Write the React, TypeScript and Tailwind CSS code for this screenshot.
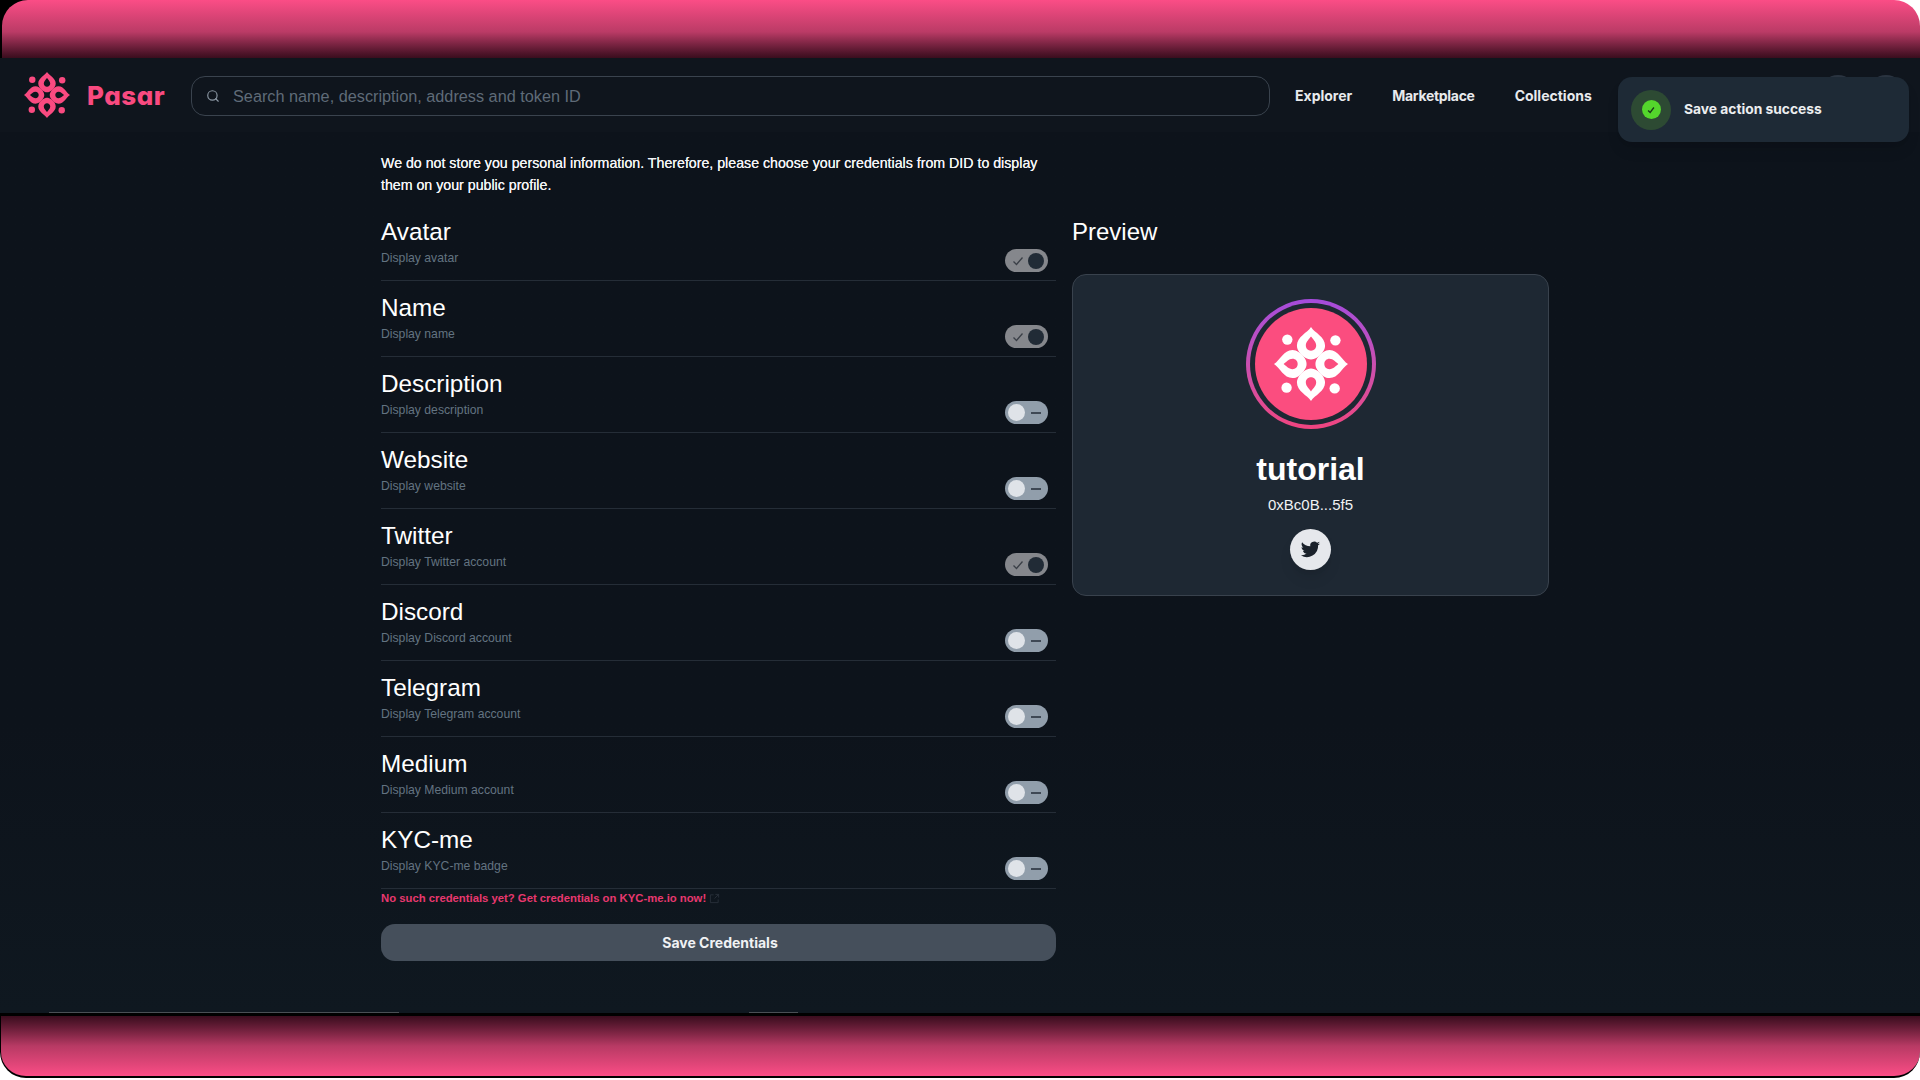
import { Search } from "lucide-react"

const rows = [
  { title: "Avatar", desc: "Display avatar", on: true },
  { title: "Name", desc: "Display name", on: true },
  { title: "Description", desc: "Display description", on: false },
  { title: "Website", desc: "Display website", on: false },
  { title: "Twitter", desc: "Display Twitter account", on: true },
  { title: "Discord", desc: "Display Discord account", on: false },
  { title: "Telegram", desc: "Display Telegram account", on: false },
  { title: "Medium", desc: "Display Medium account", on: false },
  { title: "KYC-me", desc: "Display KYC-me badge", on: false },
]

function Flower({ className, color, hole }: { className: string; color: string; hole: string }) {
  const petal = "M50 0 C55 8 69 13 69 25 C69 31 65 36 60 40 C56 43 53 44 50 44 C47 44 44 43 40 40 C35 36 31 31 31 25 C31 13 45 8 50 0 Z"
  const drop = "M50 13 C52 16 57 20 57 25 C57 29 54 32 50 32 C46 32 43 29 43 25 C43 20 48 16 50 13 Z"
  return (
    <svg viewBox="0 0 100 100" className={className}>
      {[0, 90, 180, 270].map((r) => (
        <g key={r} transform={`rotate(${r} 50 50)`}>
          <path d={petal} fill={color} />
          <path d={drop} fill={hole} />
          <circle cx="18" cy="17" r="7" fill={color} />
        </g>
      ))}
    </svg>
  )
}

function Toggle({ on }: { on: boolean }) {
  if (on) {
    return (
      <div className="flex h-[23px] w-[43px] items-center justify-between rounded-full bg-[#85878c] pl-[7px] pr-[4px]">
        <svg viewBox="0 0 12 12" className="h-3 w-3" fill="none" stroke="#3a3f47" strokeWidth="1.3">
          <path d="M1.5 6.5 L4.5 9.5 L10.5 2.5" />
        </svg>
        <div className="h-[16px] w-[16px] rounded-full bg-[#212b36]" />
      </div>
    )
  }
  return (
    <div className="flex h-[23px] w-[43px] items-center justify-between rounded-full bg-[#919eab] pl-[3px] pr-[7px]">
      <div className="h-[17px] w-[17px] rounded-full bg-[#dfe3e8]" />
      <div className="h-[2px] w-[10px] bg-[#3f4854]" />
    </div>
  )
}

export default function App() {
  return (
    <div className="flex h-[1080px] w-[1920px] flex-col overflow-hidden bg-white font-['Liberation_Sans',sans-serif] text-white">
      <div className="h-[58px] shrink-0 bg-[linear-gradient(90deg,#000_50%,#fff_50%)] pl-[2px]">
        <div className="h-full rounded-tl-[26px] rounded-tr-[26px] bg-gradient-to-b from-[#fb4d86] via-[#bb3b66] via-55% to-[#3a0d1e]" />
      </div>

      <div className="relative flex h-[955px] shrink-0 flex-col bg-gradient-to-b from-[#0d131b] via-[#0d131b] via-70% to-[#0f1820]">
        {/* Header */}
        <div className="flex h-[74px] shrink-0 items-center bg-[#0f151d] pl-[24px]">
          <Flower className="h-[46px] w-[46px]" color="#f94a80" hole="#0f151d" />
          <span className="ml-[17px] w-[84px] font-['Inter',sans-serif] text-[26px] font-extrabold tracking-[0.5px] text-[#f94a80] [font-feature-settings:'cv11']">Pasar</span>
          <div className="ml-[20px] mt-[2px] flex h-[40px] w-[1079px] items-center rounded-[14px] border border-[#3a434e] pl-[14px] text-[16.25px] text-[#5f6b78]">
            <Search className="h-[14px] w-[14px] text-[#8b97a3]" strokeWidth={2} />
            <span className="ml-[13px]">Search name, description, address and token ID</span>
          </div>
          <nav className="ml-[25px] flex gap-[40px] font-['Inter',sans-serif] text-[14px] font-bold text-[#e8eaed]">
            <span>Explorer</span>
            <span className="tracking-[-0.3px]">Marketplace</span>
            <span>Collections</span>
          </nav>
        </div>

        {/* Avatar buttons sticking out behind the toast */}
        <div className="absolute left-[1820px] top-[17px] h-[36px] w-[36px] rounded-full bg-[#2a3440]" />
        <div className="absolute left-[1868px] top-[17px] h-[36px] w-[36px] rounded-full bg-[#2a3440]" />

        {/* Toast */}
        <div className="absolute left-[1618px] top-[19px] flex h-[65px] w-[291px] items-center rounded-[14px] bg-[#1e2a36] pl-[13px] shadow-lg">
          <div className="flex h-[40px] w-[40px] items-center justify-center rounded-full bg-[#2d4a33]">
            <div className="flex h-[19px] w-[19px] items-center justify-center rounded-full bg-[#54d62c]">
              <svg viewBox="0 0 12 12" className="h-[10px] w-[10px]" fill="none" stroke="#1a3a1a" strokeWidth="1.6">
                <path d="M2.5 6.5 L5 9 L9.5 3" />
              </svg>
            </div>
          </div>
          <span className="ml-[13px] font-['Inter',sans-serif] text-[13.8px] font-bold text-[#eceef0]">Save action success</span>
        </div>

        {/* Main */}
        <div className="flex flex-1 pl-[381px] pt-[20px]">
          <div className="w-[675px]">
            <p className="text-[14.2px] font-medium leading-[22px] text-[#f2f3f5] [text-shadow:0_0_0.4px_#fff]">
              We do not store you personal information. Therefore, please choose your credentials from DID to display them on your public profile.
            </p>
            <div className="mt-[9px]">
              {rows.map((r) => (
                <div key={r.title} className="relative h-[76px] border-b border-[#252d37] pt-[10px]">
                  <div className="text-[24.3px] leading-[34px] text-white">{r.title}</div>
                  <div className="text-[12.2px] leading-[18px] text-[#637381]">{r.desc}</div>
                  <div className="absolute right-[8px] top-[44px]">
                    <Toggle on={r.on} />
                  </div>
                </div>
              ))}
            </div>
            <div className="flex h-[18px] items-center gap-[3px] text-[11.3px] font-bold text-[#e8386f]">
              <span>No such credentials yet? Get credentials on KYC-me.io now!</span>
              <svg viewBox="0 0 12 12" className="h-[11px] w-[11px]" fill="none" stroke="#28303a" strokeWidth="1">
                <path d="M5 2 H1.5 V10.5 H10 V7 M7 1.5 H10.5 V5 M10.5 1.5 L6 6" />
              </svg>
            </div>
            <button className="mt-[17px] h-[37px] w-full rounded-[14px] bg-[#454f5b] pl-[3px] font-['Inter',sans-serif] text-[14px] font-bold text-[#f0f2f4]">
              Save Credentials
            </button>
          </div>

          <div className="ml-[16px] w-[477px] pt-[62px]">
            <div className="text-[24px] leading-[36px] text-white">Preview</div>
            <div className="mt-[24px] flex h-[322px] flex-col items-center rounded-[14px] border border-[#39424d] bg-[#1e2833] pt-[24px]">
              <div className="flex h-[130px] w-[130px] items-center justify-center rounded-full bg-gradient-to-b from-[#a54bdc] to-[#f0447f] p-[4px]">
                <div className="flex h-full w-full items-center justify-center rounded-full bg-[#1e2833] p-[5px]">
                  <div className="flex h-full w-full items-center justify-center rounded-full bg-[#fb4d7f]">
                    <Flower className="h-[74px] w-[74px]" color="#ffffff" hole="#fb4d7f" />
                  </div>
                </div>
              </div>
              <div className="mt-[20px] text-[32px] font-bold leading-[40px] text-white">tutorial</div>
              <div className="mt-[5px] text-[15px] leading-[22px] text-[#f0f2f4]">0xBc0B...5f5</div>
              <div className="mt-[13px] flex h-[41px] w-[41px] items-center justify-center rounded-full bg-[#e6e8ec] shadow-lg">
                <svg viewBox="0 0 24 24" className="h-[21px] w-[21px]" fill="#1b222b">
                  <path d="M23 5c-.8.4-1.7.6-2.6.7.9-.6 1.6-1.4 2-2.5-.9.5-1.8.9-2.9 1.1A4.5 4.5 0 0 0 11.8 8.4C8 8.2 4.6 6.400 2.400 3.600c-1.200 2-.6 4.600 1.400 6-.7 0-1.400-.2-2-.6 0 2.200 1.500 4.100 3.600 4.500-.7.2-1.400.2-2 .1.600 1.800 2.200 3.100 4.200 3.100A9 9 0 0 1 1 18.600 12.800 12.800 0 0 0 20.700 7.200c.9-.6 1.700-1.400 2.300-2.200Z" />
                </svg>
              </div>
            </div>
          </div>
        </div>

        {/* Scrollbar remnants at the cut edge */}
        <div className="absolute bottom-0 left-[49px] h-px w-[350px] bg-[#4a4f55]" />
        <div className="absolute bottom-0 left-[749px] h-px w-[49px] bg-[#4a4f55]" />
      </div>

      <div className="h-[3px] shrink-0 bg-black" />
      <div className="h-[62px] shrink-0 bg-white">
        <div className="h-full rounded-bl-[26px] rounded-br-[26px] border-b-2 border-l border-black bg-gradient-to-b from-[#3a0d1e] via-[#b83a64] via-50% to-[#fb4d86]" />
      </div>
    </div>
  )
}
